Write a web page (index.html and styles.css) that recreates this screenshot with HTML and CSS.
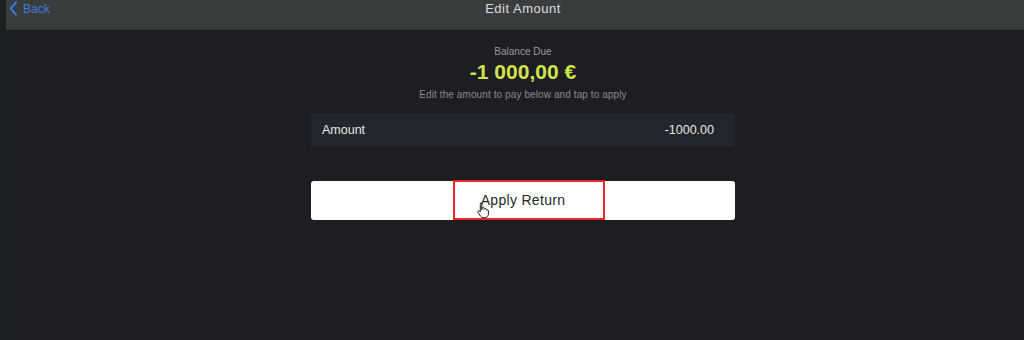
FILE: index.html
```html
<!DOCTYPE html>
<html>
<head>
<meta charset="utf-8">
<link rel="stylesheet" href="styles.css">
</head>
<body>
<div class="frame">
  <div class="strip"></div>
  <div class="app">
    <header class="navbar">
      <a class="back">
        <svg class="chev" width="9" height="15" viewBox="0 0 9 15"><path d="M7.2 1.2 L1.8 7.5 L7.2 13.8" fill="none" stroke="#3a7bd5" stroke-width="2" stroke-linecap="round" stroke-linejoin="round"/></svg>
        <span>Back</span>
      </a>
      <div class="title">Edit Amount</div>
    </header>
    <main class="content">
      <div class="summary">
        <div class="label">Balance Due</div>
        <div class="due">-1 000,00 €</div>
        <div class="hint">Edit the amount to pay below and tap to apply</div>
      </div>
      <div class="field">
        <span>Amount</span>
        <span>-1000.00</span>
      </div>
      <div class="apply">
        <div class="highlight">
          <span class="apply-text">Apply Return</span>
          <svg class="cursor" width="12" height="16" viewBox="0 0 12 16"><path d="M3.5 1.2c.7 0 1.2.5 1.2 1.2v5.2l.3-.1V6.3c0-.6.5-1.1 1.1-1.1s1.1.5 1.1 1.1v1.1c.1-.5.6-.9 1.1-.9.6 0 1.1.5 1.1 1.1v.7c.2-.4.6-.6 1-.6.6 0 1 .5 1 1.1v3.2c0 2.1-1.5 3.6-3.6 3.6H6.3c-1.2 0-2.1-.5-2.8-1.5L1 10.2c-.3-.5-.2-1.1.3-1.4.5-.3 1.1-.2 1.4.2l.6.8V2.4c0-.7.5-1.2 1.2-1.2z" fill="#fff" stroke="#222" stroke-width="1"/></svg>
        </div>
      </div>
    </main>
  </div>
</div>
</body>
</html>
```

FILE: styles.css
```css
* { box-sizing: border-box; }
html, body {
  margin: 0;
  padding: 0;
  width: 1024px;
  height: 340px;
  overflow: hidden;
  background: #1d1e22;
  font-family: "Helvetica Neue", "Liberation Sans", Arial, sans-serif;
}
.frame {
  display: flex;
  height: 340px;
}
.strip {
  width: 6px;
  flex: none;
  background: #1b201d;
}
.app {
  flex: 1;
  display: flex;
  flex-direction: column;
  background: #1d1e22;
}
.navbar {
  height: 30px;
  background: #3a3d3e;
  border-bottom: 1px solid #2f3233;
  position: relative;
  display: flex;
  align-items: flex-start;
}
.back {
  display: flex;
  align-items: center;
  gap: 5px;
  padding: 1px 0 0 3px;
  color: #3a7bd5;
  font-size: 12px;
  height: 16px;
}
.title {
  position: absolute;
  left: 0;
  right: 0;
  top: 1px;
  text-align: center;
  color: #dcdcdc;
  font-size: 13px;
  letter-spacing: 0.5px;
  padding-left: 16px;
}
.content {
  display: flex;
  flex-direction: column;
  align-items: center;
  margin-left: 16px;
}
.summary {
  display: flex;
  flex-direction: column;
  align-items: center;
  padding-top: 16px;
}
.label {
  color: #9a9a9a;
  font-size: 10px;
  line-height: 12px;
}
.due {
  color: #d2e34a;
  font-size: 21px;
  font-weight: bold;
  line-height: 24px;
  margin-top: 2px;
}
.hint {
  color: #8a8a8a;
  font-size: 10px;
  line-height: 12px;
  letter-spacing: 0.1px;
  margin-top: 5px;
}
.field {
  margin-top: 12px;
  width: 424px;
  height: 33px;
  background: #23262d;
  display: flex;
  justify-content: space-between;
  align-items: center;
  padding: 0 21px 0 11px;
  color: #e6e6e6;
  font-size: 12.5px;
}
.apply {
  margin-top: 35px;
  width: 424px;
  height: 39px;
  background: #ffffff;
  border-radius: 3px;
  display: flex;
  justify-content: center;
}
.highlight {
  position: relative;
  width: 152px;
  height: 40px;
  margin-top: -1px;
  margin-left: 12px;
  border: 2px solid #e8262b;
  display: flex;
  align-items: center;
  justify-content: center;
}
.apply-text {
  color: #262626;
  font-size: 14px;
  letter-spacing: 0.3px;
  margin-right: 12px;
}
.cursor {
  position: absolute;
  left: 22px;
  top: 20px;
}
```
